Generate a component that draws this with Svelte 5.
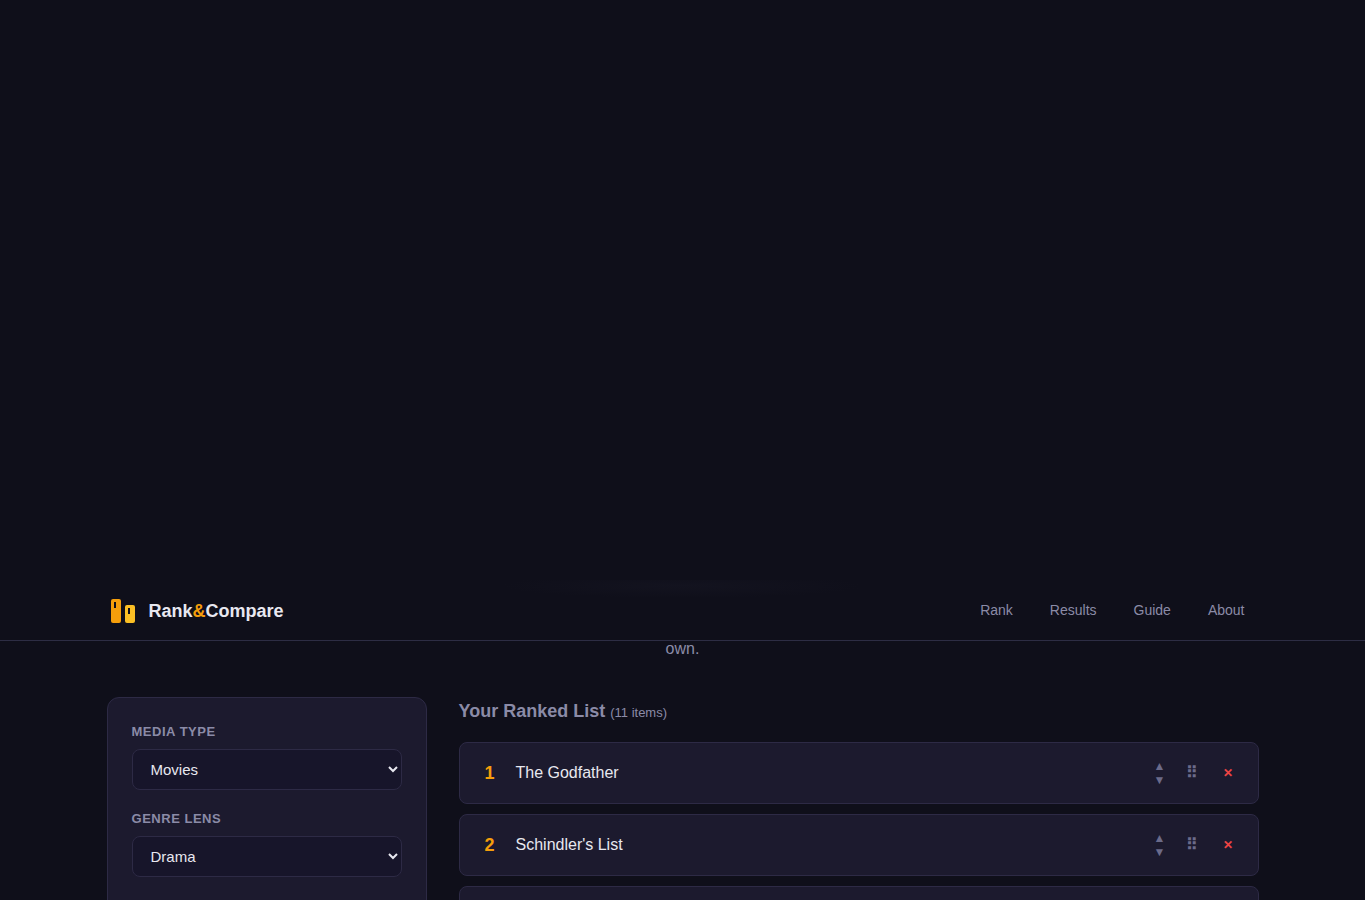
<script lang="ts">
let mediaType = 'Movies';
let genre = 'Drama';

const links = ['Rank', 'Results', 'Guide', 'About'];
const mediaTypes = ['Movies'];
const genres = ['Drama'];

let items = [
  { id: 1, title: 'The Godfather' },
  { id: 2, title: "Schindler's List" },
  { id: 3, title: '' },
];

function move(idx: number, dir: number) {
  const to = idx + dir;
  if (to < 0 || to >= items.length) return;
  const next = [...items];
  [next[idx], next[to]] = [next[to], next[idx]];
  items = next;
}
function removeItem(idx: number) {
  items = items.filter((_, i) => i !== idx);
}
</script>

<div class="page">
  <header class="site-header">
    <div class="container header-inner">
      <a class="brand" href="#home">
        <svg width="32" height="32" viewBox="0 0 32 32" aria-hidden="true">
          <rect x="4" y="4" width="10" height="24" rx="2" fill="#f59e0b" />
          <rect x="18" y="10" width="10" height="18" rx="2" fill="#fbbf24" />
          <rect x="7" y="7" width="2" height="6" fill="#0f0f1a" />
          <rect x="21" y="13" width="2" height="6" fill="#0f0f1a" />
        </svg>
        <span>Rank<span class="amp">&amp;</span>Compare</span>
      </a>
      <nav>
        {#each links as link}
          <a href="#{link.toLowerCase()}">{link}</a>
        {/each}
      </nav>
    </div>
  </header>

  <main class="container">
    <p class="intro">own.</p>

    <div class="layout">
      <aside class="sidebar">
        <div class="field">
          <label for="media-type">Media Type</label>
          <select id="media-type" bind:value={mediaType}>
            {#each mediaTypes as m}
              <option>{m}</option>
            {/each}
          </select>
        </div>
        <div class="field">
          <label for="genre">Genre Lens</label>
          <select id="genre" bind:value={genre}>
            {#each genres as g}
              <option>{g}</option>
            {/each}
          </select>
        </div>
      </aside>

      <section class="ranking">
        <h2>Your Ranked List <span class="count">(11 items)</span></h2>
        <ol class="rank-list">
          {#each items as item, i (item.id)}
            <li class="rank-item">
              {#if item.title}
                <span class="rank">{i + 1}</span>
                <span class="title">{item.title}</span>
                <span class="arrows">
                  <button aria-label="Move up" on:click={() => move(i, -1)}>▲</button>
                  <button aria-label="Move down" on:click={() => move(i, 1)}>▼</button>
                </span>
                <span class="handle">⠿</span>
                <button class="remove" aria-label="Remove" on:click={() => removeItem(i)}>✕</button>
              {/if}
            </li>
          {/each}
        </ol>
      </section>
    </div>
  </main>
</div>

<style>
:global(body) {
  background: #0f0f1a;
}

.page {
  box-sizing: border-box;
  height: 100vh;
  overflow: hidden;
  padding-top: 580px;
  background: #0f0f1a;
  color: #e8e8f0;
  font-family: 'Liberation Sans', Arial, sans-serif;
  font-size: 16px;
}

.container {
  box-sizing: border-box;
  max-width: 1200px;
  margin: 0 auto;
  padding: 0 24px;
}

.site-header {
  background: radial-gradient(ellipse 180px 12px at 50% 6px, #13131f, transparent);
  border-bottom: 1px solid #2d2d44;
}
.header-inner {
  display: flex;
  justify-content: space-between;
  align-items: center;
  height: 60px;
}
.brand {
  display: flex;
  align-items: center;
  gap: 10px;
  padding-top: 2px;
  color: #e8e8f0;
  font-size: 18px;
  font-weight: 700;
  text-decoration: none;
}
.amp {
  color: #f59e0b;
}
nav {
  display: flex;
  gap: 9px;
}
nav a {
  padding: 6px 14px;
  color: #8b8ba7;
  font-size: 14px;
  text-decoration: none;
}

.intro {
  margin: 0 0 40px;
  color: #8b8ba7;
  line-height: 16px;
  text-align: center;
}

.layout {
  display: grid;
  grid-template-columns: 320px 1fr;
  gap: 32px;
}

.sidebar {
  box-sizing: border-box;
  min-height: 480px;
  padding: 24px;
  background: #1c1a2e;
  border: 1px solid #2d2a45;
  border-radius: 12px;
}
.field {
  margin-bottom: 19px;
}
.field label {
  display: block;
  margin-bottom: 7px;
  color: #8b8ba7;
  font-size: 13px;
  font-weight: 700;
  line-height: 20px;
  letter-spacing: 0.04em;
  text-transform: uppercase;
}
.field select {
  display: block;
  width: 100%;
  height: 41px;
  padding: 0 14px;
  background: #17152a;
  border: 1px solid #2d2a45;
  border-radius: 8px;
  color: #e8e8f0;
  font-family: inherit;
  font-size: 15px;
}

h2 {
  margin: 0 0 15px;
  color: #8b8ba7;
  font-size: 18px;
  line-height: 28px;
}
.count {
  font-size: 13px;
  font-weight: 400;
}

.rank-list {
  display: flex;
  flex-direction: column;
  gap: 10px;
  margin: 0;
  padding: 0;
  list-style: none;
}
.rank-item {
  box-sizing: border-box;
  display: flex;
  align-items: center;
  gap: 16px;
  min-height: 62px;
  padding: 0 20px;
  background: #1c1a2e;
  border: 1px solid #2d2a45;
  border-radius: 8px;
}
.rank {
  width: 20px;
  color: #f59e0b;
  font-size: 18px;
  font-weight: 700;
  text-align: center;
}
.title {
  flex: 1;
}
.rank-item button {
  display: block;
  padding: 0;
  background: none;
  border: 0;
  color: #6b6b8a;
  font-family: inherit;
  cursor: pointer;
}
.arrows {
  display: flex;
  flex-direction: column;
}
.arrows button {
  width: 12px;
  font-size: 12px;
  line-height: 14px;
}
.handle {
  width: 20px;
  color: #6b6b8a;
  font-size: 16px;
  font-weight: 700;
  line-height: 20px;
  text-align: center;
  cursor: grab;
}
.rank-item .remove {
  width: 20px;
  color: #ef4444;
  font-size: 12px;
  font-weight: 700;
  line-height: 16px;
}
</style>
